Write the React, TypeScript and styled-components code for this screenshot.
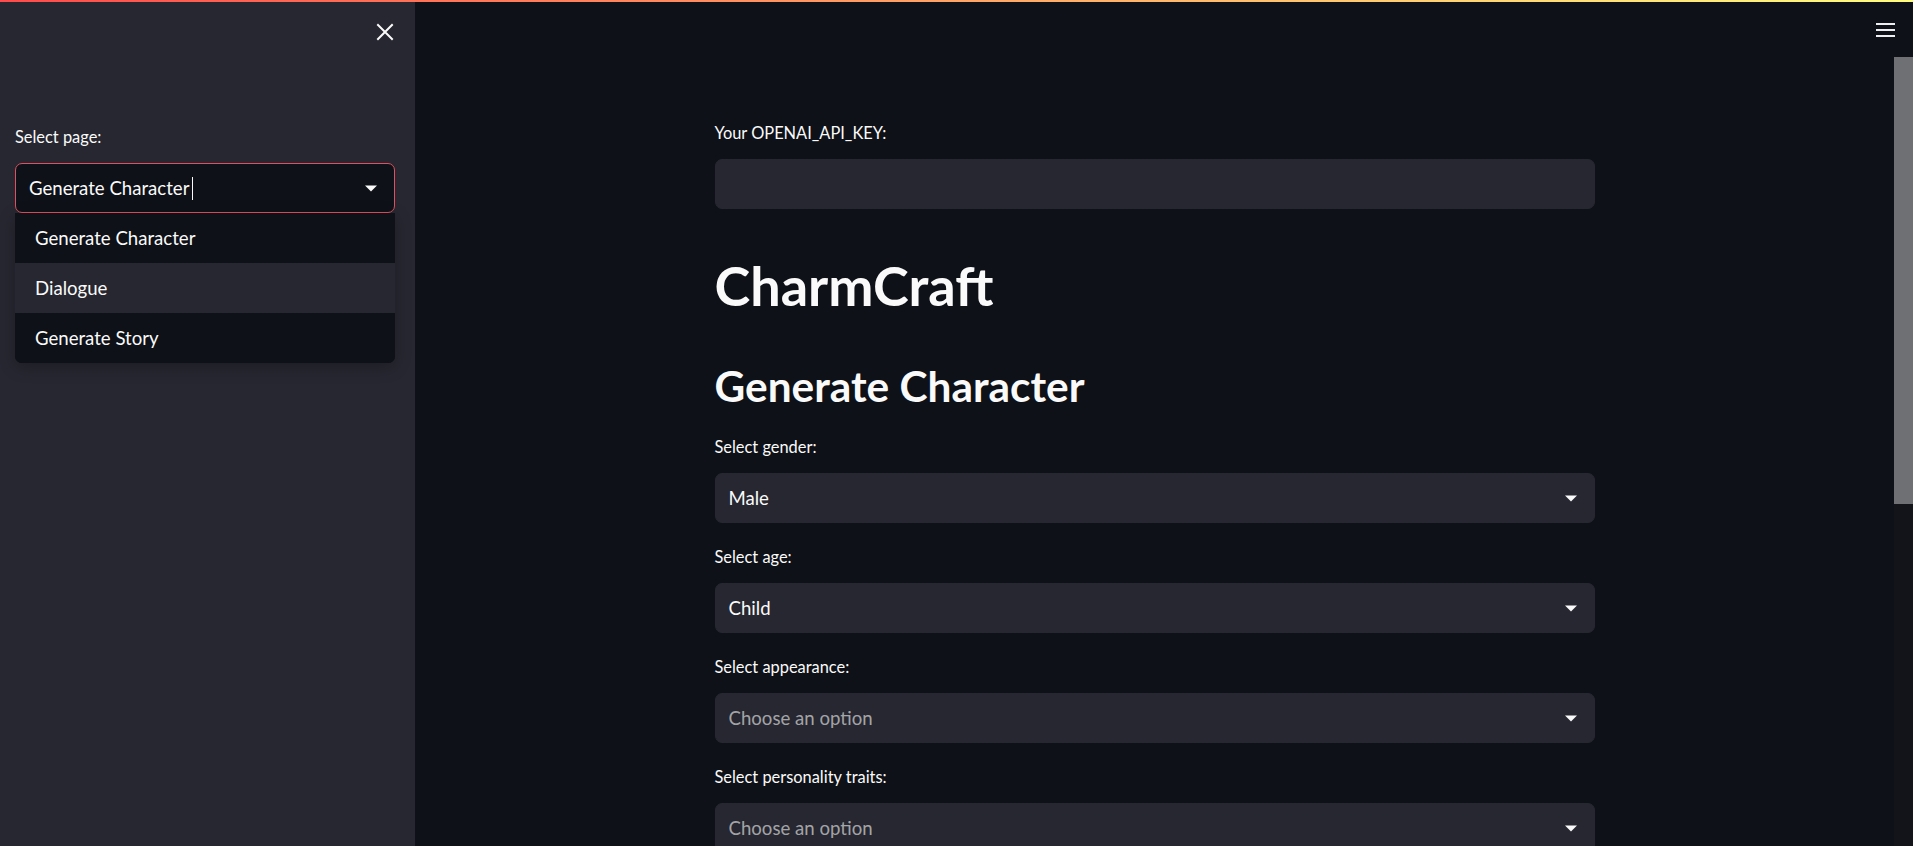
import styled, { createGlobalStyle } from "styled-components";

const PAGES = ["Generate Character", "Dialogue", "Generate Story"] as const;

const FIELDS: { label: string; value?: string }[] = [
  { label: "Select gender:", value: "Male" },
  { label: "Select age:", value: "Child" },
  { label: "Select appearance:" },
  { label: "Select personality traits:" },
];

const GlobalStyle = createGlobalStyle`
  html, body {
    margin: 0;
    padding: 0;
    height: 100%;
    background: #0e1117;
  }
  body {
    font-family: Lato, "Liberation Sans", sans-serif;
    color: #fafafa;
    overflow: hidden;
  }
  #root {
    height: 100%;
  }
`;

const Decoration = styled.div`
  position: fixed;
  top: 0;
  left: 0;
  right: 0;
  height: 2px;
  background: linear-gradient(90deg, #ff4b4b, #fffd80);
  z-index: 10;
`;

const Shell = styled.div`
  display: flex;
  height: 100vh;
`;

const Sidebar = styled.aside`
  width: 415px;
  flex-shrink: 0;
  box-sizing: border-box;
  padding: 0 20px 0 15px;
  background: #262730;
  display: flex;
  flex-direction: column;
`;

const SidebarTop = styled.div`
  height: 64px;
  display: flex;
  justify-content: flex-end;
  align-items: center;
`;

const IconButton = styled.button`
  background: none;
  border: none;
  padding: 0;
  color: #fafafa;
  display: flex;
  cursor: pointer;
`;

const Field = styled.div<{ $gap?: number }>`
  margin-top: ${(p) => p.$gap ?? 20}px;
  display: flex;
  flex-direction: column;
`;

const Label = styled.label`
  font-size: 16.4px;
  line-height: 27px;
  margin-bottom: 13px;
  color: #fafafa;
`;

const SelectWrap = styled.div`
  position: relative;
`;

const SelectBox = styled.div<{ $focused?: boolean }>`
  height: 50px;
  box-sizing: border-box;
  display: flex;
  align-items: center;
  padding: 0 17px 0 13px;
  border-radius: 7px;
  border: 1px solid ${(p) => (p.$focused ? "#e0505e" : "#262730")};
  background: ${(p) => (p.$focused ? "#0e1117" : "#262730")};
`;

const Value = styled.span<{ $placeholder?: boolean }>`
  flex: 1;
  font-size: 18.6px;
  color: ${(p) => (p.$placeholder ? "rgba(250, 250, 250, 0.6)" : "#fafafa")};
  display: flex;
  align-items: center;
`;

const Caret = styled.span`
  display: inline-block;
  width: 1px;
  height: 23px;
  margin-left: 3px;
  background: #fafafa;
`;

const TextInput = styled.input`
  height: 50px;
  box-sizing: border-box;
  border: 1px solid #262730;
  border-radius: 7px;
  background: #262730;
  color: #fafafa;
  padding: 0 13px;
  font: inherit;
  font-size: 18.6px;
  outline: none;
`;

const Menu = styled.ul`
  position: absolute;
  top: 100%;
  left: 0;
  right: 0;
  margin: 0;
  padding: 0;
  list-style: none;
  background: #0e1117;
  border-radius: 0 0 7px 7px;
  overflow: hidden;
  box-shadow: 0 4px 16px rgba(0, 0, 0, 0.25);
  z-index: 5;
`;

const MenuItem = styled.li<{ $hover?: boolean }>`
  height: 50px;
  display: flex;
  align-items: center;
  padding-left: 20px;
  font-size: 18.6px;
  background: ${(p) => (p.$hover ? "#262730" : "#0e1117")};
`;

const Main = styled.main`
  flex: 1;
  min-width: 0;
  display: flex;
  flex-direction: column;
`;

const Header = styled.header`
  height: 57px;
  flex-shrink: 0;
  display: flex;
  justify-content: flex-end;
  align-items: flex-start;
  padding: 23px 18px 0 0;
  box-sizing: border-box;
`;

const Body = styled.div`
  flex: 1;
  min-height: 0;
  display: flex;
  overflow: hidden;
`;

const Content = styled.div`
  flex: 1;
  display: flex;
  justify-content: center;
`;

const Column = styled.div`
  width: 880px;
  padding-top: 62px;
  display: flex;
  flex-direction: column;
`;

const Title = styled.h1`
  margin: 46px 0 0;
  font-size: 54px;
  line-height: 61px;
  font-weight: 700;
`;

const Subtitle = styled.h2`
  margin: 46px 0 0;
  font-size: 42.4px;
  line-height: 48px;
  font-weight: 700;
`;

const ScrollTrack = styled.div`
  width: 19px;
  flex-shrink: 0;
  background: #13141a;
`;

const ScrollThumb = styled.div`
  height: 447px;
  background: #6e7073;
`;

function TriangleDown() {
  return (
    <svg width="12" height="7" viewBox="0 0 12 7">
      <path d="M0 0.5 L12 0.5 L6 6.5 Z" fill="#fafafa" />
    </svg>
  );
}

function CloseIcon() {
  return (
    <svg width="20" height="20" viewBox="0 0 20 20">
      <path
        d="M3 3 L17 17 M17 3 L3 17"
        stroke="#fafafa"
        strokeWidth="2"
        strokeLinecap="square"
      />
    </svg>
  );
}

function MenuIcon() {
  return (
    <svg width="19" height="14" viewBox="0 0 19 14">
      <path d="M0 1 H19 M0 7 H19 M0 13 H19" stroke="#eceef2" strokeWidth="2" />
    </svg>
  );
}

export default function App() {
  return (
    <>
      <GlobalStyle />
      <Decoration />
      <Shell>
        <Sidebar>
          <SidebarTop>
            <IconButton aria-label="Close sidebar">
              <CloseIcon />
            </IconButton>
          </SidebarTop>
          <Field $gap={59}>
            <Label>Select page:</Label>
            <SelectWrap>
              <SelectBox $focused>
                <Value>
                  Generate Character
                  <Caret />
                </Value>
                <TriangleDown />
              </SelectBox>
              <Menu>
                {PAGES.map((p, i) => (
                  <MenuItem key={p} $hover={i === 1}>
                    {p}
                  </MenuItem>
                ))}
              </Menu>
            </SelectWrap>
          </Field>
        </Sidebar>

        <Main>
          <Header>
            <IconButton aria-label="Main menu">
              <MenuIcon />
            </IconButton>
          </Header>
          <Body>
            <Content>
              <Column>
                <Field $gap={0}>
                  <Label>Your OPENAI_API_KEY:</Label>
                  <TextInput type="password" />
                </Field>

                <Title>CharmCraft</Title>
                <Subtitle>Generate Character</Subtitle>

                {FIELDS.map((f, i) => (
                  <Field key={f.label} $gap={i === 0 ? 23 : 20}>
                    <Label>{f.label}</Label>
                    <SelectBox>
                      <Value $placeholder={!f.value}>
                        {f.value ?? "Choose an option"}
                      </Value>
                      <TriangleDown />
                    </SelectBox>
                  </Field>
                ))}
              </Column>
            </Content>
            <ScrollTrack>
              <ScrollThumb />
            </ScrollTrack>
          </Body>
        </Main>
      </Shell>
    </>
  );
}
